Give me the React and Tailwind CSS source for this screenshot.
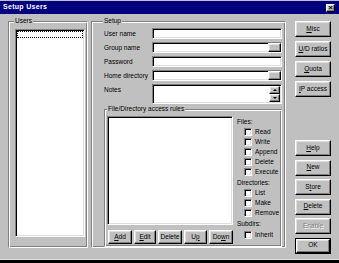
const raised = "border border-t-white border-l-white border-r-black border-b-black shadow-[inset_-1px_-1px_0_#808080,inset_1px_1px_0_#dfdfdf]";
const sunken = "border border-t-[#808080] border-l-[#808080] border-r-white border-b-white shadow-[inset_1px_1px_0_#000,inset_-1px_-1px_0_#dfdfdf]";

const Group = ({ label, labelPos, className, children }) => (
  <div className={`relative border border-t-[#808080] border-l-[#808080] border-r-white border-b-white shadow-[inset_1px_1px_0_#fff,inset_-1px_-1px_0_#808080] ${className}`}>
    <span className={`absolute -top-[5px] bg-[#c0c0c0] px-[1px] leading-[8px] ${labelPos}`}>{label}</span>
    {children}
  </div>
);

const Btn = ({ children, className = "", disabled }) => (
  <div
    className={`${raised} flex items-center justify-center bg-[#c0c0c0] leading-none ${
      disabled ? "text-[#808080] [text-shadow:1px_1px_0_#fff]" : "text-black"
    } ${className}`}
  >
    {children}
  </div>
);

const U = ({ children }) => <span className="underline underline-offset-1">{children}</span>;

const Field = ({ browse }) => (
  <div className={`${sunken} flex-1 h-[11px] bg-white flex justify-end`}>
    {browse && <div className={`${raised} w-[13px] h-full bg-[#c0c0c0]`} />}
  </div>
);

const Check = ({ label }) => (
  <div className="flex items-center h-[10px] pl-[7px] gap-[3px]">
    <div className={`${sunken} w-[8px] h-[8px] bg-white`} />
    <span>{label}</span>
  </div>
);

export default function App() {
  return (
    <div className="w-[339px] h-[263px] bg-[#c0c0c0] pt-[1px] border-b-[3px] border-black shadow-[inset_0_-1px_0_#dfdfdf] flex flex-col overflow-hidden text-[6.5px] text-black font-['Liberation_Sans',Arial,sans-serif]">
      {/* title bar */}
      <div className="h-[13px] bg-[#000080] flex items-center justify-between pl-[3px] pr-[4px]">
        <span className="text-white font-bold text-[7px] tracking-[0.3px]">Setup Users</span>
        <div className={`${raised} w-[9px] h-[8px] bg-[#c0c0c0] flex items-center justify-center text-[8px] font-bold leading-none`}>×</div>
      </div>

      <div className="flex pt-[7px] pl-[8px]">
        {/* users */}
        <Group label="Users" labelPos="left-[5px]" className="w-[80px] h-[227px] pt-[7px] pl-[6px]">
          <div className={`${sunken} w-[70px] h-[208px] bg-white p-[1px]`}>
            <div className="h-[7px] border border-dotted border-black" />
          </div>
        </Group>

        {/* setup */}
        <Group label="Setup" labelPos="left-[11px]" className="ml-[3px] w-[195px] h-[227px] pt-[6px] pl-[12px] pr-[3px] flex flex-col">
          <div className="flex flex-col gap-[3px]">
            {[
              ["User name", false],
              ["Group name", true],
              ["Password", false],
              ["Home directory", true],
            ].map(([l, b]) => (
              <div key={l} className="flex items-center">
                <span className="w-[48px]">{l}</span>
                <Field browse={b} />
              </div>
            ))}
            <div className="flex items-start">
              <span className="w-[48px] pt-[1px]">Notes</span>
              <div className={`${sunken} flex-1 h-[20px] bg-white flex justify-end p-[1px]`}>
                <div className="w-[11px] flex flex-col">
                  <div className={`${raised} h-[8px] bg-[#c0c0c0] flex items-center justify-center`}>
                    <div className="w-0 h-0 border-x-[2px] border-x-transparent border-b-[2px] border-b-black" />
                  </div>
                  <div className="flex-1 bg-[#dfdfdf]" />
                  <div className={`${raised} h-[8px] bg-[#c0c0c0] flex items-center justify-center`}>
                    <div className="w-0 h-0 border-x-[2px] border-x-transparent border-t-[2px] border-t-black" />
                  </div>
                </div>
              </div>
            </div>
          </div>

          <Group label="File/Directory access rules" labelPos="left-[2px]" className="mt-[5px] h-[138px] pt-[6px] pl-[2px] flex">
            <div className="w-[126px] flex flex-col">
              <div className={`${sunken} h-[109px] bg-white`} />
              <div className="flex gap-[2px] mt-[5px] pl-[1px]">
                <Btn className="w-[24px] h-[14px]"><U>A</U>dd</Btn>
                <Btn className="w-[22px] h-[14px]"><U>E</U>dit</Btn>
                <Btn className="w-[24px] h-[14px]">Delete</Btn>
                <Btn className="w-[23px] h-[14px]">U<U>p</U></Btn>
                <Btn className="w-[24px] h-[14px]">Do<U>w</U>n</Btn>
              </div>
            </div>
            <div className="ml-[4px] flex flex-col pt-[1px]">
              <div className="h-[10px] flex items-center">Files:</div>
              <Check label="Read" />
              <Check label="Write" />
              <Check label="Append" />
              <Check label="Delete" />
              <Check label="Execute" />
              <div className="h-[10px] mt-[1px] flex items-center">Directories:</div>
              <Check label="List" />
              <Check label="Make" />
              <Check label="Remove" />
              <div className="h-[10px] mt-[1px] flex items-center">Subdirs:</div>
              <div className="mt-[1px]">
                <Check label="Inherit" />
              </div>
            </div>
          </Group>
        </Group>

        {/* buttons */}
        <div className="ml-[9px] w-[36px] flex flex-col">
          <div className="flex flex-col gap-[4px]">
            <Btn className="h-[16px]"><U>M</U>isc</Btn>
            <Btn className="h-[16px]"><U>U</U>/D ratios</Btn>
            <Btn className="h-[16px]"><U>Q</U>uota</Btn>
            <Btn className="h-[16px]"><U>I</U>P access</Btn>
          </div>
          <div className="flex flex-col gap-[3.5px] mt-[43px]">
            <Btn className="h-[16px]"><U>H</U>elp</Btn>
            <Btn className="h-[16px]"><U>N</U>ew</Btn>
            <Btn className="h-[16px]">S<U>t</U>ore</Btn>
            <Btn className="h-[16px]"><U>D</U>elete</Btn>
            <Btn className="h-[16px]" disabled>Enable</Btn>
            <div className="border border-black h-[16px] flex">
              <Btn className="flex-1">OK</Btn>
            </div>
          </div>
        </div>
      </div>
    </div>
  );
}
